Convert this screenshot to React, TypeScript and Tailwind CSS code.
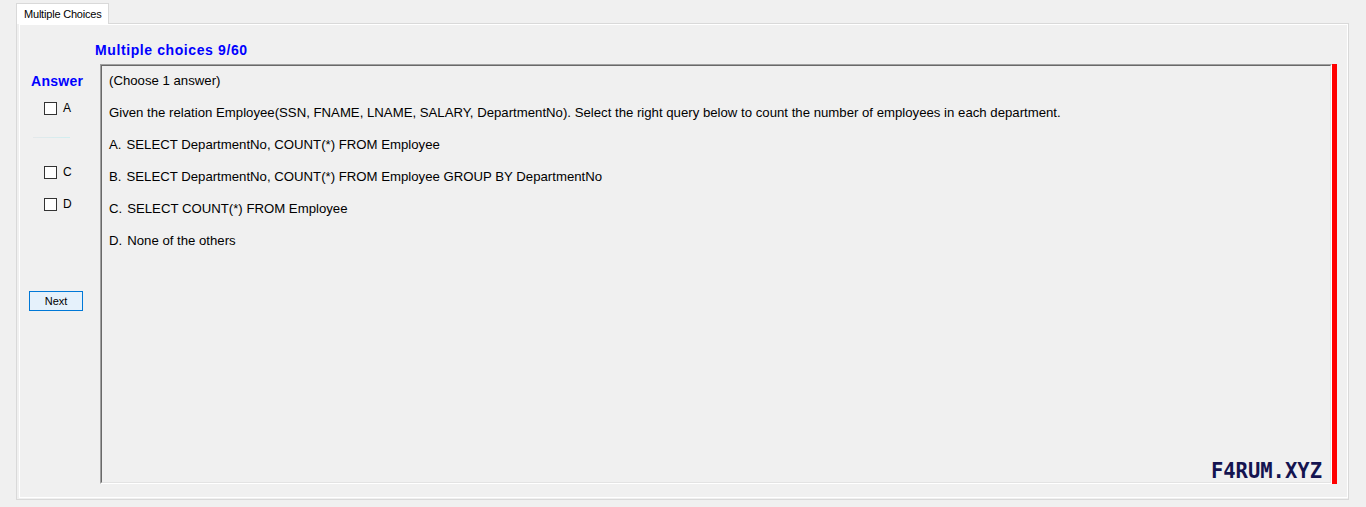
import React from "react";

const Check = ({ label }: { label: string }) => (
  <div className="h-[32px] flex items-center">
    <div className="ml-[24px] w-[13px] h-[13px] border border-[#333333] bg-white" />
    <span className="ml-[6px] text-[12px] leading-none text-black">{label}</span>
  </div>
);

export default function App() {
  const lines: [string, string][] = [
    ["", "(Choose 1 answer)"],
    ["", "Given the relation Employee(SSN, FNAME, LNAME, SALARY, DepartmentNo). Select the right query below to count the number of employees in each department."],
    ["A.", "SELECT DepartmentNo, COUNT(*) FROM Employee"],
    ["B.", "SELECT DepartmentNo, COUNT(*) FROM Employee GROUP BY DepartmentNo"],
    ["C.", "SELECT COUNT(*) FROM Employee"],
    ["D.", "None of the others"],
  ];
  return (
    <div
      className="w-[1366px] h-[507px] bg-[#f0f0f0] overflow-hidden text-black"
      style={{ fontFamily: '"Liberation Sans", Arial, sans-serif' }}
    >
      <div className="pl-[16px] pt-[3px]">
        <div className="relative z-10 -mb-px w-[93px] h-[21px] border border-b-0 border-[#d9d9d9] bg-white pl-[7px] pt-[4px] text-[11px] leading-[12px] tracking-[-0.2px]">
          Multiple Choices
        </div>
      </div>
      <div className="ml-[16px] w-[1333px] h-[477px] border border-[#d9d9d9]">
        <div className="ml-[2px] h-[474px] border border-white">
          <div className="ml-[75px] mt-[17px] h-[16px] text-[14px] leading-[16px] font-bold text-[#0000ff] tracking-[0.6px]">
            Multiple choices 9/60
          </div>
          <div className="mt-[6px] flex">
            <div className="w-[80px] flex flex-col">
              <div className="ml-[11px] mt-[9px] h-[16px] text-[14px] leading-[16px] font-bold text-[#0000ff] tracking-[0.3px]">
                Answer
              </div>
              <div className="mt-[3px] flex flex-col">
                <Check label="A" />
                <div className="h-[32px] flex items-start">
                  <div className="ml-[13px] mt-[13px] w-[37px] h-px bg-gradient-to-r from-[#e4e8ea] to-[#cfeef0]" />
                </div>
                <Check label="C" />
                <Check label="D" />
              </div>
              <button className="ml-[9px] mt-[71px] w-[54px] h-[20px] border border-[#0078d7] bg-[#e5f1fb] text-[11px] leading-none text-black">
                Next
              </button>
            </div>
            <div className="w-[1232px] h-[420px] border border-t-[#a0a0a0] border-l-[#a0a0a0] border-b-white border-r-white">
              <div className="relative h-full border border-t-[#696969] border-l-[#696969] border-b-[#e3e3e3] border-r-[#e3e3e3] pl-[7px] pt-[7px]">
                {lines.map(([k, l], i) => (
                  <div key={i} className="h-[16px] mb-[16px] text-[13.2px] leading-[16px] whitespace-pre flex">
                    {k && <span>{k}</span>}
                    <span className={k ? "ml-[5px]" : ""}>{l}</span>
                  </div>
                ))}
                <div
                  className="absolute right-[8px] bottom-[1px] text-[20.5px] leading-none font-bold text-[#141450]"
                  style={{ fontFamily: '"DejaVu Sans Mono", monospace' }}
                >
                  F4RUM.XYZ
                </div>
              </div>
            </div>
            <div className="w-[5px] h-[420px] bg-[#ff0000]" />
          </div>
        </div>
      </div>
    </div>
  );
}
